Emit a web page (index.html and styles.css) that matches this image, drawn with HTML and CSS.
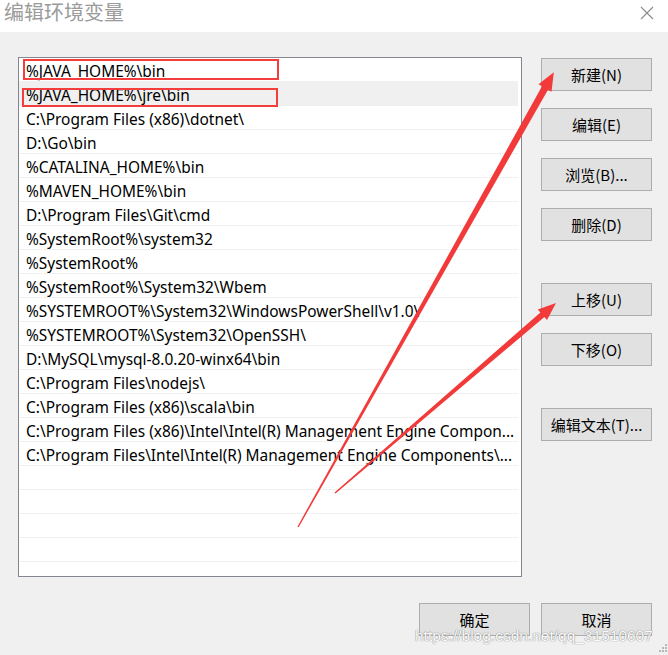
FILE: index.html
```html
<!DOCTYPE html>
<html lang="zh">
<head>
<meta charset="utf-8">
<title>编辑环境变量</title>
<link rel="stylesheet" href="styles.css">
</head>
<body>
<div class="dialog">
  <div class="titlebar">
    <div class="title">编辑环境变量</div>
    <svg class="close" width="14" height="14" viewBox="0 0 14 14"><path d="M1 1L13 13M13 1L1 13" stroke="#8a8a8a" stroke-width="1.1" fill="none"/></svg>
  </div>
  <div class="body">
    <div class="content">
      <div class="list">
        <div class="row">%JAVA_HOME%\bin</div>
        <div class="row selected">%JAVA_HOME%\jre\bin</div>
        <div class="row">C:\Program Files (x86)\dotnet\</div>
        <div class="row">D:\Go\bin</div>
        <div class="row">%CATALINA_HOME%\bin</div>
        <div class="row">%MAVEN_HOME%\bin</div>
        <div class="row">D:\Program Files\Git\cmd</div>
        <div class="row">%SystemRoot%\system32</div>
        <div class="row">%SystemRoot%</div>
        <div class="row">%SystemRoot%\System32\Wbem</div>
        <div class="row">%SYSTEMROOT%\System32\WindowsPowerShell\v1.0\</div>
        <div class="row">%SYSTEMROOT%\System32\OpenSSH\</div>
        <div class="row">D:\MySQL\mysql-8.0.20-winx64\bin</div>
        <div class="row">C:\Program Files\nodejs\</div>
        <div class="row">C:\Program Files (x86)\scala\bin</div>
        <div class="row">C:\Program Files (x86)\Intel\Intel(R) Management Engine Compon...</div>
        <div class="row">C:\Program Files\Intel\Intel(R) Management Engine Components\...</div>
        <div class="row"></div>
        <div class="row"></div>
        <div class="row"></div>
        <div class="row"></div>
        <div class="row"></div>
        <div class="mark mark1"></div>
        <div class="mark mark2"></div>
      </div>
      <div class="side">
        <div class="btn">新建(N)</div>
        <div class="btn">编辑(E)</div>
        <div class="btn">浏览(B)...</div>
        <div class="btn">删除(D)</div>
        <div class="btn gap">上移(U)</div>
        <div class="btn">下移(O)</div>
        <div class="btn gap">编辑文本(T)...</div>
      </div>
    </div>
    <div class="footer">
      <div class="btn">确定</div>
      <div class="btn">取消</div>
    </div>
  </div>
  <div class="watermark">https://blog.csdn.net/qq_31510607</div>
  <svg class="grip" width="10" height="10" viewBox="0 0 10 10">
    <g fill="#b8b8b8">
      <rect x="8" y="0" width="2" height="2"/>
      <rect x="5" y="3" width="2" height="2"/><rect x="8" y="3" width="2" height="2"/>
      <rect x="2" y="6" width="2" height="2"/><rect x="5" y="6" width="2" height="2"/><rect x="8" y="6" width="2" height="2"/>
    </g>
  </svg>
  <svg class="arrows" width="668" height="655" viewBox="0 0 668 655">
    <polygon points="297.4,526.7 542,86.3 538.5,84.3 553.8,72.3 551.5,91.7 548,89.7 298.6,527.3" fill="#f23a3a"/>
    <polygon points="334.5,492.5 540.4,312.4 537.8,309.4 556,303 547,320 544.4,317 335.5,493.5" fill="#f23a3a"/>
  </svg>
</div>
</body>
</html>
```
FILE: styles.css
```css
* { box-sizing: border-box; }
html, body { margin: 0; padding: 0; overflow: hidden; }
body {
  width: 668px;
  height: 655px;
  font-family: "Noto Sans", "Noto Sans CJK SC", sans-serif;
  color: #000;
}
.dialog {
  position: relative;
  width: 668px;
  height: 655px;
  background: #f0f0f0;
  overflow: hidden;
}
.titlebar {
  height: 32px;
  background: #fff;
  display: flex;
  align-items: flex-start;
  justify-content: space-between;
  padding: 0 14px 0 4px;
}
.title {
  font-family: "Noto Sans CJK SC", sans-serif;
  font-size: 20px;
  color: #9b9b9b;
  line-height: 26px;
  margin-top: -1px;
}
.close { margin-top: 6px; }
.body {
  display: flex;
  flex-direction: column;
}
.content {
  display: flex;
  padding: 25px 0 0 18px;
  gap: 19px;
}
.list {
  position: relative;
  width: 504px;
  height: 520px;
  background: #fff;
  border: 1px solid #828790;
  overflow: hidden;
  padding-right: 3px;
}
.row {
  height: 24px;
  line-height: 22px;
  padding-top: 2px;
  border-bottom: 1px solid #f0f0f0;
  padding-left: 7px;
  font-size: 15.45px;
  white-space: nowrap;
}
.row.selected { background: #f0f0f0; }
.mark {
  position: absolute;
  border: 2px solid #f43d3d;
}
.mark1 { left: 4px; top: 1px; width: 256px; height: 21px; }
.mark2 { left: 3px; top: 30px; width: 256px; height: 19px; }
.side {
  display: flex;
  flex-direction: column;
  gap: 17px;
  padding-top: 1px;
}
.btn {
  width: 111px;
  height: 33px;
  background: #e1e1e1;
  border: 1px solid #adadad;
  font-family: "Noto Sans CJK SC", sans-serif;
  font-size: 15px;
  display: flex;
  align-items: center;
  justify-content: center;
}
.btn.gap { margin-top: 25px; }
.footer {
  display: flex;
  justify-content: flex-end;
  gap: 11px;
  padding: 26px 16px 0 0;
}
.watermark {
  position: absolute;
  left: 415px;
  top: 627px;
  z-index: 4;
  font-family: "Liberation Sans", sans-serif;
  font-size: 15.5px;
  line-height: 18px;
  color: #fafafa;
  text-shadow: 0 0 1px #8a8a8a, 0 0 1px #8a8a8a;
  white-space: nowrap;
}
.grip {
  position: absolute;
  right: 1px;
  bottom: 1px;
  z-index: 4;
  display: block;
}
.arrows {
  position: absolute;
  left: 0;
  top: 0;
  z-index: 5;
  display: block;
  pointer-events: none;
}
```
